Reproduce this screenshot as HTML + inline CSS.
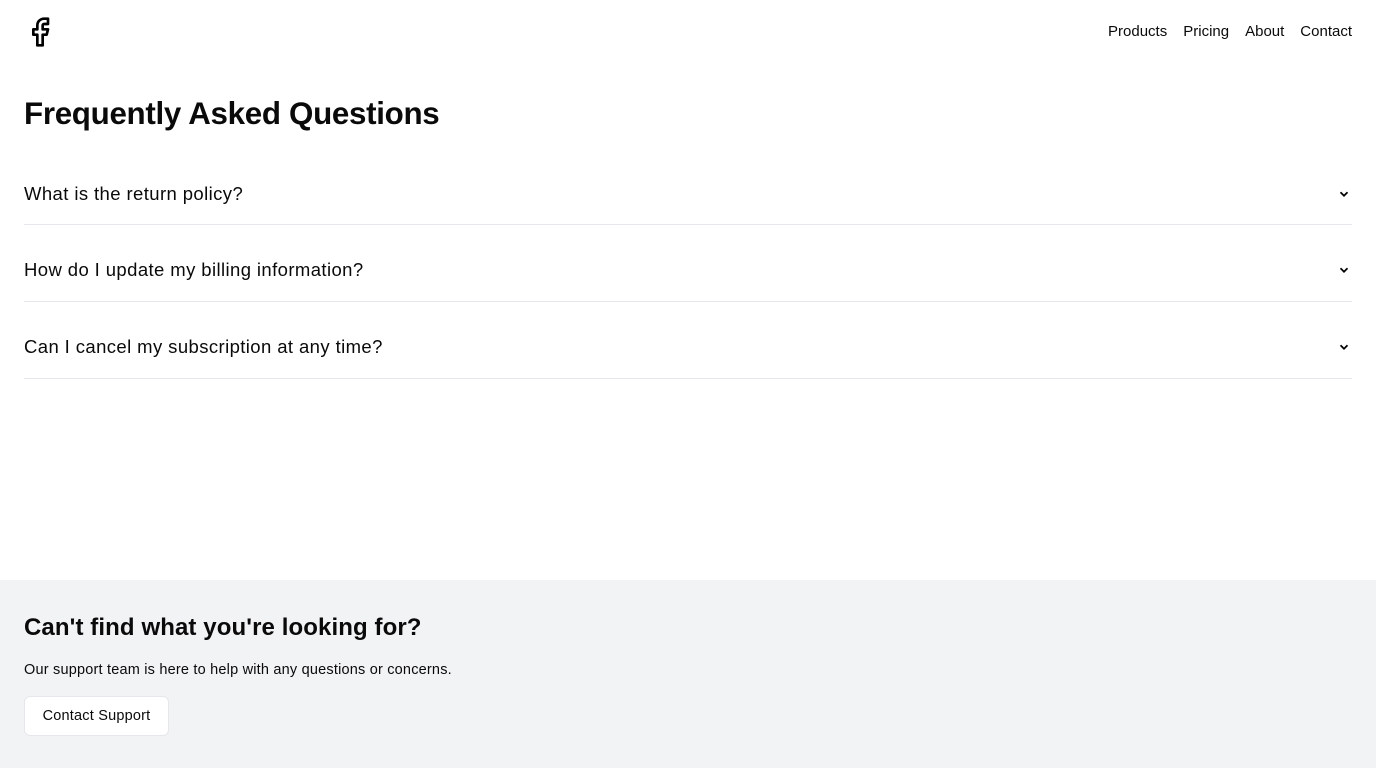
<!DOCTYPE html>
<html><head><meta charset="utf-8"><style>
*{box-sizing:border-box;margin:0;padding:0}
body{width:1376px;height:768px;font-family:"Liberation Sans",sans-serif;color:#0a0a0a;background:#fff;position:relative;overflow:hidden}
.nav{position:absolute;top:23px;right:24px;display:flex;gap:16px;font-size:15px}
.logo{position:absolute;left:24px;top:16px}
h1{position:absolute;left:24px;top:96px;font-size:31.3px;font-weight:700;letter-spacing:-0.3px}
.faq{position:absolute;left:24px;top:155px;width:1328px}
.item{height:77px;border-bottom:1px solid #e5e7eb;display:flex;align-items:center;justify-content:space-between;font-size:18.5px;letter-spacing:0.4px;padding-top:14px}
.item:first-child{height:70px;padding-top:8px}
.item svg{margin-right:1px}
.foot{position:absolute;left:0;top:580px;width:1376px;height:188px;background:#f2f3f5}
.foot h2{position:absolute;left:24px;top:34px;font-size:24px;font-weight:700;letter-spacing:0.1px}
.foot p{position:absolute;left:24px;top:82px;font-size:14.5px;letter-spacing:0.2px}
.btn{position:absolute;left:24px;top:116px;width:145px;height:40px;background:#fff;border:1px solid #e5e7eb;border-radius:6px;font-size:14.5px;display:flex;align-items:center;justify-content:center;letter-spacing:0.2px}
</style></head><body>
<svg class="logo" width="32" height="32" viewBox="0 0 24 24" fill="none" stroke="#000" stroke-width="2" stroke-linejoin="round" stroke-linecap="round"><path d="M18 2h-3a5 5 0 0 0-5 5v3H7v4h3v8h4v-8h3l1-4h-4V7a1 1 0 0 1 1-1h3z"/></svg>
<div class="nav"><span>Products</span><span>Pricing</span><span>About</span><span>Contact</span></div>
<h1>Frequently Asked Questions</h1>
<div class="faq">
<div class="item"><span>What is the return policy?</span><svg width="14" height="14" viewBox="0 0 24 24" fill="none" stroke="#000" stroke-width="3"><path d="M6 9l6 6 6-6"/></svg></div>
<div class="item"><span>How do I update my billing information?</span><svg width="14" height="14" viewBox="0 0 24 24" fill="none" stroke="#000" stroke-width="3"><path d="M6 9l6 6 6-6"/></svg></div>
<div class="item"><span>Can I cancel my subscription at any time?</span><svg width="14" height="14" viewBox="0 0 24 24" fill="none" stroke="#000" stroke-width="3"><path d="M6 9l6 6 6-6"/></svg></div>
</div>
<div class="foot">
<h2>Can't find what you're looking for?</h2>
<p>Our support team is here to help with any questions or concerns.</p>
<div class="btn">Contact Support</div>
</div>
</body></html>
